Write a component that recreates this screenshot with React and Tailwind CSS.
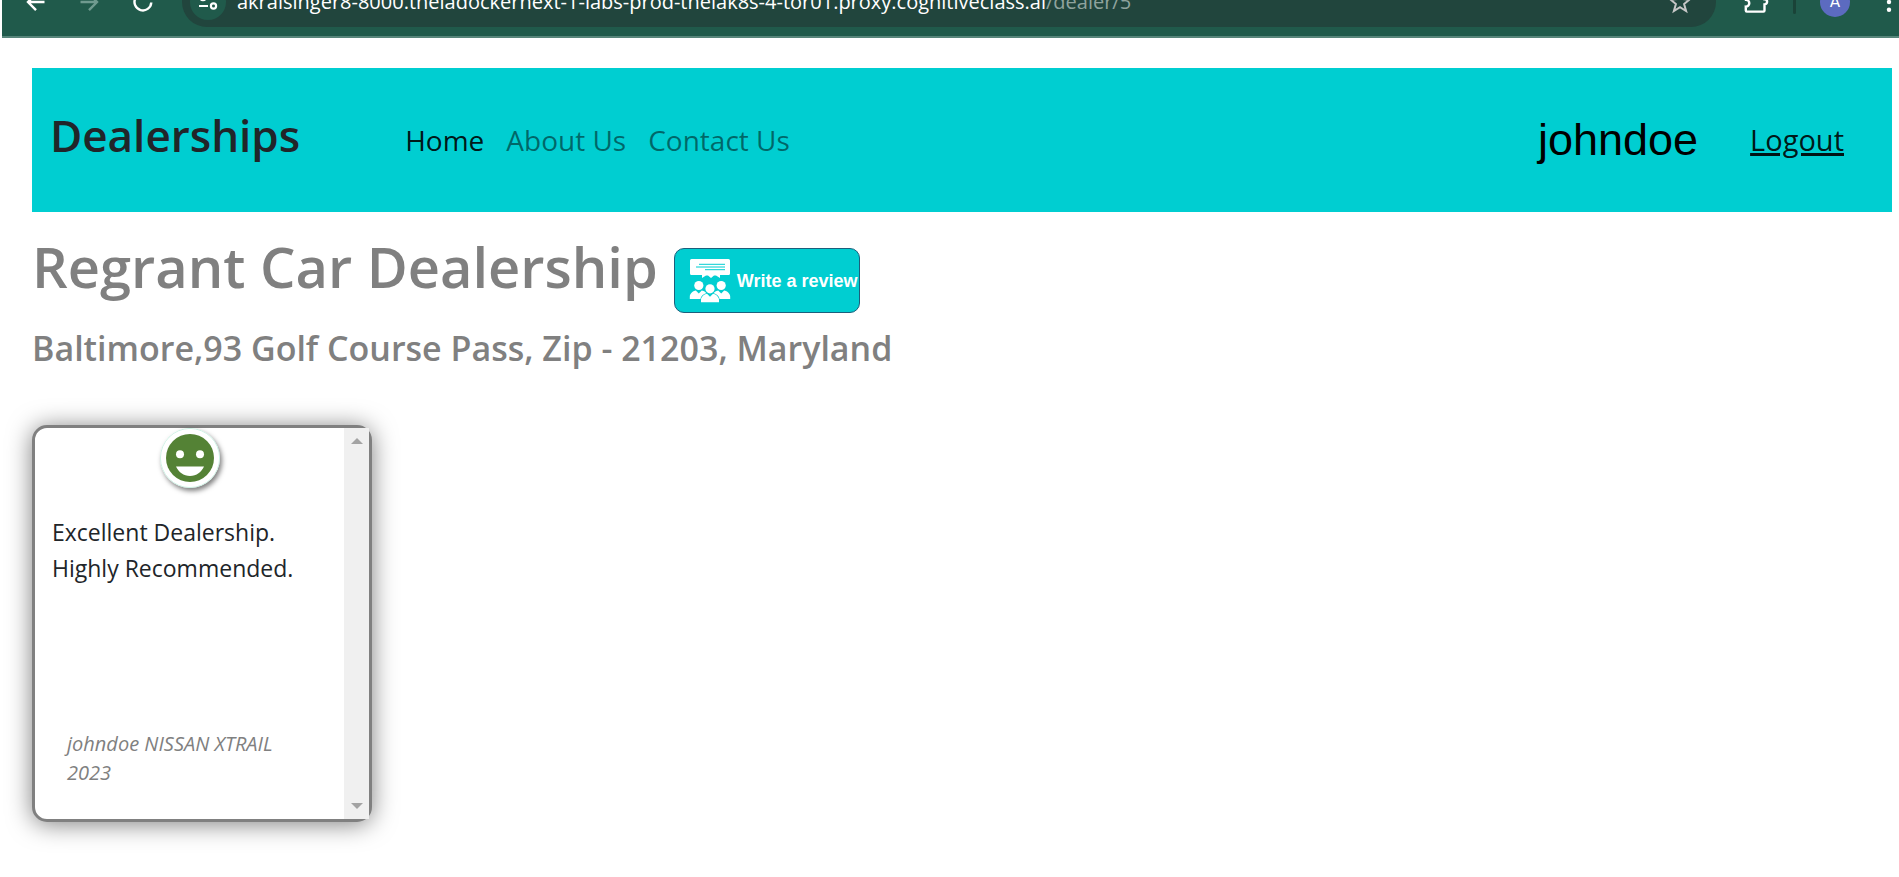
import React from "react";

const UI = "font-['Open_Sans','Noto_Sans',sans-serif]";

function ArrowIcon({ flip, className }) {
  return (
    <svg viewBox="0 0 20 20" className={className} fill="none" stroke="currentColor" strokeWidth="2.4" aria-hidden="true">
      <path d={flip ? "M1.5 10H18M10 1.8L18 10L10 18.2" : "M18.5 10H2M10 1.8L2 10L10 18.2"} />
    </svg>
  );
}

function BrowserBar() {
  return (
    <header className="ml-[2px] flex h-[38px] flex-col justify-end overflow-hidden border-b-2 border-[#57857a] bg-[#205a4b]">
      <div className="flex h-[68px] shrink-0 items-center pl-6 text-white">
        <button aria-label="Back" className="h-5 w-5">
          <ArrowIcon className="h-5 w-5" />
        </button>
        <button aria-label="Forward" className="ml-[33px] h-5 w-5 text-[#6f9a8f]">
          <ArrowIcon flip className="h-5 w-5" />
        </button>
        <button aria-label="Reload" className="ml-[34px] h-5 w-5">
          <svg viewBox="0 0 20 20" className="h-5 w-5 overflow-visible" fill="none" stroke="currentColor" strokeWidth="2.4" aria-hidden="true">
            <path d="M18.3 10.5A8.4 8.4 0 1 1 15.6 3.8L18 6M18.4 0V6.5H12" />
          </svg>
        </button>
        <div className="ml-[29px] flex h-[50px] flex-1 items-center rounded-full bg-[#21453d] pr-[26px] pl-2">
          <button aria-label="Site information" className="flex h-9 w-9 items-center justify-center rounded-full bg-[#205a4b]">
            <svg viewBox="0 0 20 20" className="h-5 w-5" fill="none" stroke="currentColor" strokeWidth="2.2" aria-hidden="true">
              <circle cx="5" cy="5.5" r="2.6" />
              <path d="M10.5 5.5H19M1 14H10" />
              <circle cx="15.5" cy="14" r="2.6" />
            </svg>
          </button>
          <span className={`ml-[11px] flex-1 text-xl leading-6 whitespace-nowrap ${UI}`}>
            akraisinger8-8000.theiadockernext-1-labs-prod-theiak8s-4-tor01.proxy.cognitiveclass.ai
            <span className="text-[#8fa39e]">/dealer/5</span>
          </span>
          <button aria-label="Bookmark" className="h-5 w-5 text-[#c7c7c7]">
            <svg viewBox="0 0 20 20" className="h-5 w-5 overflow-visible" fill="none" stroke="currentColor" strokeWidth="2" aria-hidden="true">
              <path d="M10 0.5L12.5 7L19.5 7.5L14.1 12L16.1 19L10 15.1L3.9 19L5.9 12L0.5 7.5L7.5 7Z" />
            </svg>
          </button>
        </div>
        <button aria-label="Extensions" className="ml-7 h-6 w-6">
          <svg viewBox="0 0 24 24" className="h-6 w-6 overflow-visible" fill="none" stroke="currentColor" strokeWidth="2.4" aria-hidden="true">
            <path d="M3.2 4.5H8.5A2.6 2.6 0 0 1 13.7 4.5H20.5V9.2A2.6 2.6 0 0 1 20.5 14.4V20.6A1 1 0 0 1 19.5 21.6H2.8A1 1 0 0 1 1.8 20.6V16.6A3.4 3.4 0 0 0 2 9.8V4.5" />
          </svg>
        </button>
        <span className="ml-[25px] h-6 w-[3px] rounded bg-[#1a4338]" />
        <button aria-label="Profile" className="ml-6 flex h-[30px] w-[30px] items-center justify-center rounded-full bg-[#5c6bc0] font-['Roboto',sans-serif] text-base">
          A
        </button>
        <button aria-label="Menu" className="ml-[29px] h-5 w-5">
          <svg viewBox="0 0 20 20" className="h-5 w-5" fill="currentColor" aria-hidden="true">
            <circle cx="10" cy="2.2" r="2.2" />
            <circle cx="10" cy="10" r="2.2" />
            <circle cx="10" cy="17.8" r="2.2" />
          </svg>
        </button>
      </div>
    </header>
  );
}

function NavBar() {
  return (
    <nav className="flex h-36 items-center bg-[#00ced1] pr-12 pl-[18px]">
      <h2 className="pb-2.5 text-[44px] leading-[56px] font-semibold text-[#212529]">Dealerships</h2>
      <div className="ml-[105px] flex gap-[22px] text-[28px] leading-10">
        <a href="#home" className="text-black/90">Home</a>
        <a href="#about" className="text-black/50">About Us</a>
        <a href="#contact" className="text-black/50">Contact Us</a>
      </div>
      <div className="ml-auto flex items-center gap-[52px]">
        <span className="font-['Liberation_Sans',Arial,sans-serif] text-[45px] leading-[56px] text-black">johndoe</span>
        <a href="#logout" className="text-[29px] leading-10 text-black/90 underline decoration-[3px] underline-offset-2">Logout</a>
      </div>
    </nav>
  );
}

function Person({ x, y }) {
  return (
    <g transform={`translate(${x} ${y})`}>
      <circle cx="0" cy="0" r="4.6" />
      <path d="M-9 13.5V11C-9 7.5 -5 5.3 -3 5L0 8L3 5C5 5.3 9 7.5 9 11V13.5Z" />
    </g>
  );
}

function ReviewIcon() {
  return (
    <svg viewBox="0 0 40 44" className="h-11 w-10 overflow-visible" fill="#fff" aria-hidden="true">
      <path d="M1.5 0H38.5Q40 0 40 1.5V14.5Q40 16 38.5 16H30V19L26 16.5H24L21 19L18 16.5H16L12 19V16H1.5Q0 16 0 14.5V1.5Q0 0 1.5 0Z" />
      <path d="M9 5.3H35M6 8H35M15 10.7H35" stroke="#00ced1" strokeWidth="1" />
      <Person x={8.8} y={26.5} />
      <Person x={31.2} y={26.5} />
      <g stroke="#00ced1" strokeWidth="1.6" paintOrder="stroke">
        <Person x={20} y={29.8} />
      </g>
    </svg>
  );
}

function ReviewCard() {
  return (
    <article className="flex h-[397px] w-[340px] rounded-[15px] border-[3px] border-[#808080] bg-white shadow-[0_2px_24px_rgba(0,0,0,0.5)]">
      <div className="flex flex-1 flex-col">
        <svg viewBox="0 0 60 60" className="h-[60px] w-[60px] self-center rounded-full bg-white shadow-[2px_3px_5px_rgba(0,0,0,0.5)]" role="img" aria-label="Positive">
          <circle cx="30" cy="30" r="29.6" fill="#fff" stroke="#b5ecd9" strokeWidth="0.7" />
          <circle cx="30" cy="30" r="24" fill="#548235" />
          <circle cx="20" cy="26.3" r="4" fill="#fff" />
          <circle cx="40" cy="26.3" r="4" fill="#fff" />
          <path d="M16 38.5H44C41.5 44 36.5 48 30 48S18.5 44 16 38.5Z" fill="#fff" />
        </svg>
        <p className="mt-[26px] px-[17px] text-[23px] leading-9 text-[#212529]">
          Excellent Dealership. Highly Recommended.
        </p>
        <p className="mt-auto mb-8 pr-[60px] pl-8 text-xl leading-[29px] text-[#808080] italic">
          johndoe NISSAN XTRAIL 2023
        </p>
      </div>
      <div className="flex w-[25px] flex-col items-center justify-between bg-[#f0f0f0] py-[10px]" aria-hidden="true">
        <svg viewBox="0 0 12 6" className="h-[6px] w-3" fill="#a3a3a3"><path d="M6 0L12 6H0Z" /></svg>
        <svg viewBox="0 0 12 6" className="h-[6px] w-3" fill="#a3a3a3"><path d="M0 0H12L6 6Z" /></svg>
      </div>
    </article>
  );
}

export default function App() {
  return (
    <div className={`min-h-screen bg-white ${UI}`}>
      <BrowserBar />
      <main className="pt-[30px] pr-[7px] pl-8">
        <NavBar />
        <div className="mt-[18px] flex items-start gap-4">
          <h1 className="text-[56px] leading-[72px] font-semibold text-[#808080]">Regrant Car Dealership</h1>
          <a
            href="#review"
            className="mt-[18px] flex h-[65px] w-[186px] items-center gap-[7px] rounded-[10px] border border-[#1c5f7c] bg-[#00ced1] pl-[15px] font-['Liberation_Sans',Arial,sans-serif] text-lg font-bold whitespace-nowrap text-white"
          >
            <ReviewIcon />
            Write a review
          </a>
        </div>
        <h4 className="mt-[13px] text-[34px] leading-[44px] font-semibold text-[#808080]">
          Baltimore,93 Golf Course Pass, Zip - 21203, Maryland
        </h4>
        <section className="mt-[55px] pb-8">
          <ReviewCard />
        </section>
      </main>
    </div>
  );
}
